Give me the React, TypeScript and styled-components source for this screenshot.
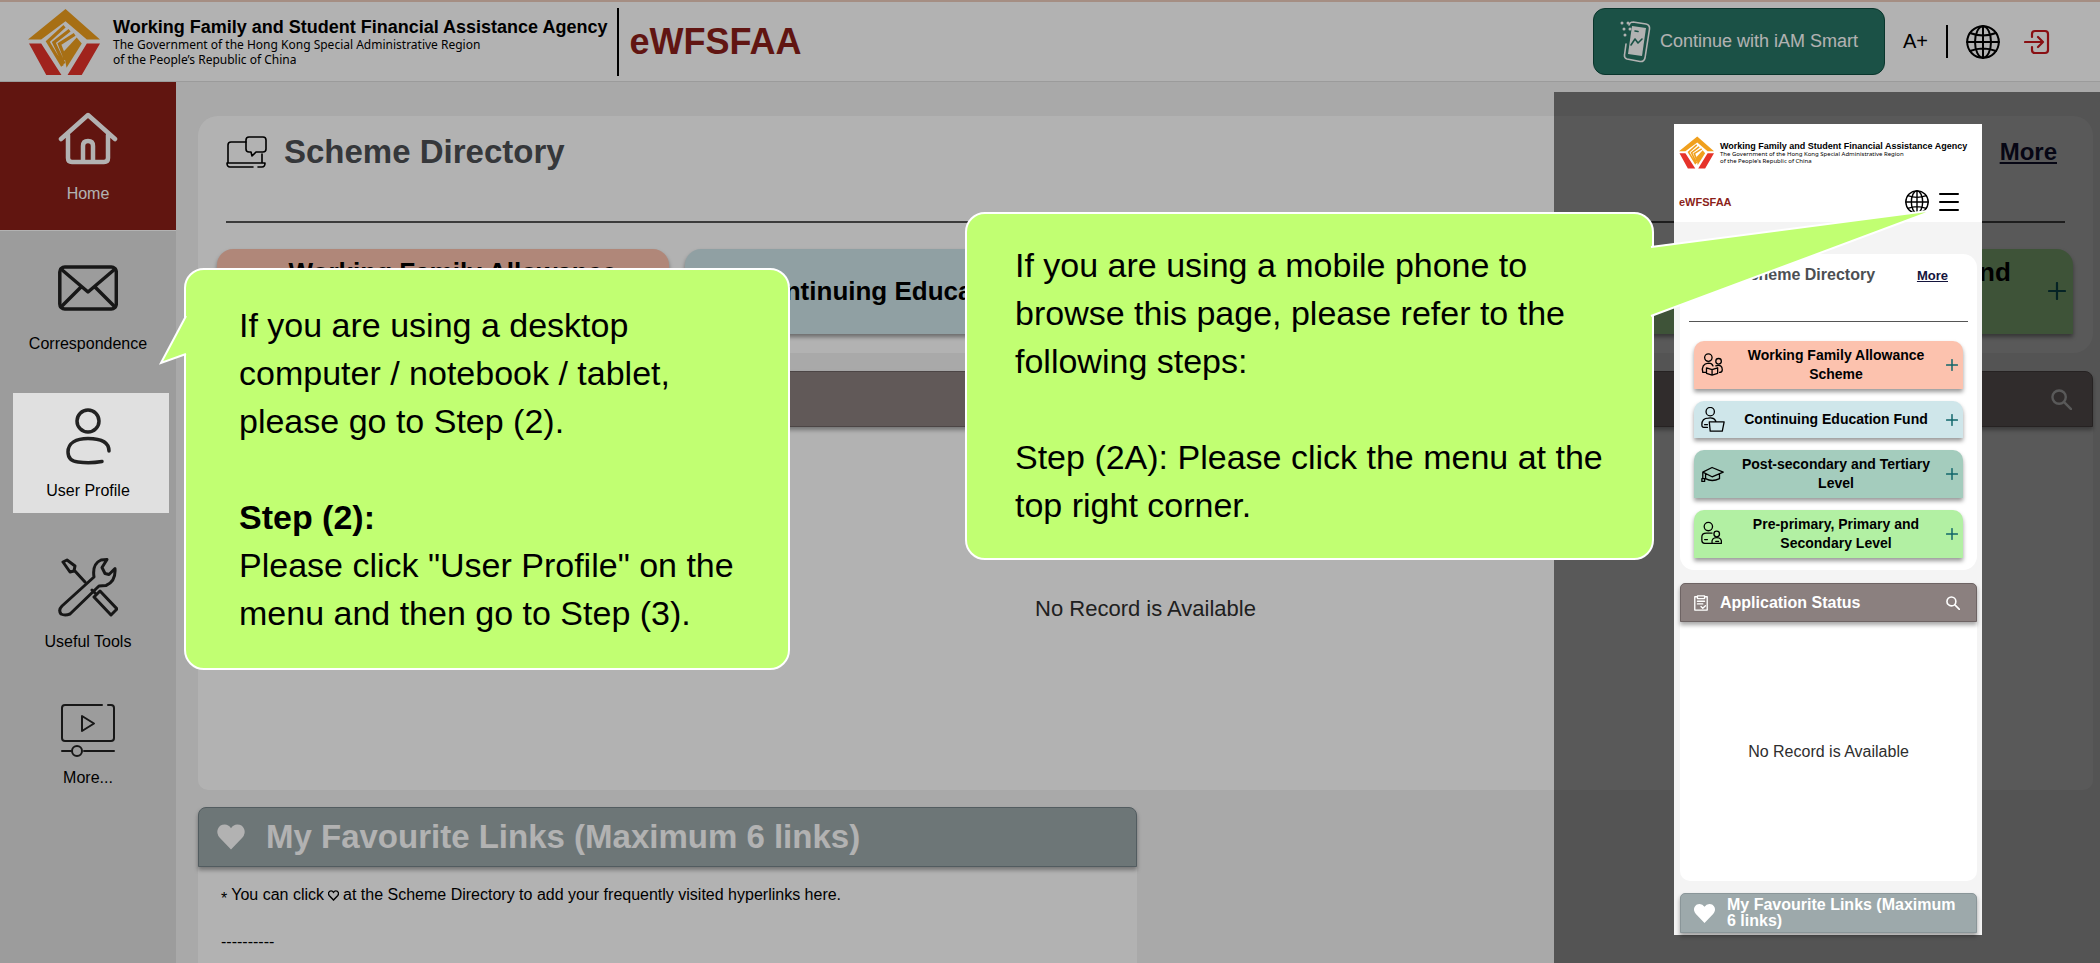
import React from "react";
import styled, { createGlobalStyle, css } from "styled-components";

const GlobalStyle = createGlobalStyle`
  *, *::before, *::after { box-sizing: border-box; }
  body { margin: 0; background: #f2f2f2; font-family: "Liberation Sans", Arial, sans-serif; color: #000; }
  button { font: inherit; color: inherit; border: 0; background: none; padding: 0; cursor: pointer; }
  a { color: inherit; text-decoration: none; }
  h1, h2, p, ul { margin: 0; padding: 0; }
  svg { display: block; flex: none; }
`;

/* ---------- icons ---------- */

const Line = styled.svg`
  fill: none;
  stroke: currentColor;
  stroke-linecap: round;
  stroke-linejoin: round;
`;

const AgencyLogo = ({ size }: { size: number }) => (
  <svg width={size} height={size} viewBox="0 -3 71 71" aria-hidden="true">
    <path fill="#f0a01e" d="M37 0 71 30H58L37 12 13 30H0Z" />
    <path fill="#e6332a" d="M1 34h12l20 31H18ZM71 34H58L39 65h14Z" />
    <path fill="none" stroke="#f0a01e" strokeWidth="3.2" d="M36 17 19.500 32 34 56M41 21 25.500 33 35.500 54M46 25 31 34.500 37 50" />
    <path fill="#f0a01e" d="m48 28 5 6-15 24-3-16Z" />
  </svg>
);

const HomeIcon = () => (
  <Line width="60" height="60" viewBox="0 0 60 60" strokeWidth="4.500">
    <path d="M3 30 30 6l27 24M10 26v23q0 4 4 4h32q4 0 4-4V26" />
    <path d="M25 52V37q0-5 5-5t5 5v15" />
  </Line>
);

const MailIcon = () => (
  <Line width="60" height="60" viewBox="0 0 60 60" strokeWidth="3.500">
    <rect x="1.800" y="8" width="56.500" height="42" rx="5" />
    <path d="m3 10 27 23 27-23M3 48l20-20M57 48 37 28" />
  </Line>
);

const UserIcon = () => (
  <Line width="60" height="60" viewBox="0 0 60 60" strokeWidth="3.500">
    <circle cx="30" cy="15" r="11" />
    <path d="M51 45C51 36 42 32.500 30 32.500S10 37 10 46q0 9 10 10 12 1.500 24-.5" />
  </Line>
);

const ToolsIcon = () => (
  <Line width="60" height="60" viewBox="0 0 60 60" strokeWidth="3">
    <path d="M3 57q-3-4 1-8L36 20Q34 7 43 3l6-.5-5 8 3 6 4 1 6-6q1 13-9 17l-7 .5L12 57q-5 2-9 0Z" />
    <path d="M16 13 27 25M34 33l4 4M5 5l4-2 8 6-1 5-4 1ZM36 40l6-6 17 18-6 6Z" />
  </Line>
);

const VideoIcon = () => (
  <Line width="60" height="60" viewBox="0 0 60 60" strokeWidth="2">
    <path d="M44 4H7Q4 4 4 7v30q0 3 3 3h46q3 0 3-3V7q0-3-3-3h-3M24 15v15l12-7.500ZM4 50h9M26 50h30" />
    <circle cx="19" cy="50" r="5" />
  </Line>
);

const SchemeIcon = ({ width }: { width: number }) => (
  <Line width={width} viewBox="0 0 41 32" strokeWidth="1.600">
    <path d="M20 6H5Q2 6 2 9v18M36 18v9M1 27h38q0 4-3 4h-4M27 31H4q-3 0-3-4" />
    <path d="M23 1h14q3 0 3 3v9q0 3-3 3h-7l-4 4-1-4h-2q-3 0-3-3V4q0-3 3-3Z" />
  </Line>
);

const GlobeIcon = ({ size }: { size: number }) => (
  <Line width={size} height={size} viewBox="0 0 34 34" strokeWidth="2">
    <circle cx="17" cy="17" r="15.800" />
    <ellipse cx="17" cy="17" rx="8" ry="15.800" />
    <path d="M17 1v32M1 17h32M4 8q13 5 26 0M4 26q13-5 26 0" />
  </Line>
);

const LogoutIcon = () => (
  <Line width="26" height="26" viewBox="0 0 26 26" strokeWidth="2.200">
    <path d="M8 8V5q0-3 3-3h10q3 0 3 3v16q0 3-3 3H11q-3 0-3-3v-3M1 13h18M14 8l5 5-5 5" />
  </Line>
);

const SmartPhoneIcon = () => (
  <Line width="32" height="44" viewBox="0 0 32 44" strokeWidth="1.600">
    <path d="M13 2l13 2q4 1 3.500 5L25 38q-1 4-5 3.500L7 39q-3-1-2.500-4L6 24M9 5q1-3 4-3" />
    <path fill="currentColor" stroke="none" d="M12 6l14 2-4 28-14-2Z" />
    <path stroke="#287565" d="m11 25 4-6 3 4 4-4M15 11l3 .5M12 37l5 1" />
    <path strokeWidth="3" strokeDasharray="0 6" d="M2 3h8M4 9h8M5 15h3" />
  </Line>
);

const SearchIcon = ({ size }: { size: number }) => (
  <Line width={size} height={size} viewBox="0 0 22 22" strokeWidth="2.500">
    <circle cx="8.500" cy="8.500" r="7" />
    <path d="m14 14 7 7" />
  </Line>
);

const HeartIcon = ({ size, outline }: { size: number; outline?: boolean }) => (
  <svg
    width={size}
    height={size}
    viewBox="0 0 24 24"
    fill={outline ? "none" : "currentColor"}
    stroke={outline ? "currentColor" : "none"}
    strokeWidth="3"
    aria-hidden="true"
  >
    <path d="M12 22 3 12.500Q0 9 1.500 5.500 3 2 7 2q3 0 5 3 2-3 5-3 4 0 5.500 3.500Q24 9 21 12.500Z" />
  </svg>
);

const ClipboardIcon = ({ size }: { size: number }) => (
  <Line width={size} height={size} viewBox="0 0 16 18" strokeWidth="1.500">
    <path d="M4 2H1v15h14V2h-3M4 1h8v3H4ZM4 7h8M4 10h6M8 13l2 2 3-3" />
  </Line>
);

const MenuIcon = () => (
  <Line width="20" height="20" viewBox="0 0 20 20" strokeWidth="2">
    <path d="M1 2h18M1 10h18M1 18h18" />
  </Line>
);

const PlusIcon = ({ size }: { size: number }) => (
  <Line width={size} height={size} viewBox="0 0 18 18" strokeWidth="2.200" color="#10656a">
    <path d="M1 9h16M9 1v16" />
  </Line>
);

const schemeDrawings: Record<string, React.ReactNode> = {
  family: (
    <>
      <circle cx="8" cy="6" r="4" />
      <circle cx="19" cy="10" r="3" />
      <path d="M5 22H2q-2-9 6-10 4 0 5 3M16 15q7-2 7 4 0 3-3 3M6 17l6 2 6-2v6l-6 2-6-2ZM12 19v6" />
    </>
  ),
  education: (
    <>
      <circle cx="10" cy="5" r="4.500" />
      <path d="M7 22H3q-2 0-2-3 0-7 7-7 6-1 8 3M9 16h16l-2 10H10ZM4 19h3" />
    </>
  ),
  graduate: <path d="M2 12 12 7l12 5-12 5ZM5 14v5q7 4 15 0v-5M2 12v7M1 19h3v3H1Z" />,
  child: (
    <>
      <circle cx="8" cy="6" r="4.500" />
      <circle cx="17" cy="14" r="3" />
      <path d="M11 24H4q-3 0-3-3v-4q0-4 5-4h6M12 24q-1-6 5-6t5 6ZM4 20h3M16 22h3" />
    </>
  ),
};

const SchemeGlyph = ({ name, size }: { name: string; size: number }) => (
  <Line width={size} height={size} viewBox="0 0 26 28" strokeWidth="1.400">
    {schemeDrawings[name]}
  </Line>
);

/* ---------- page frame ---------- */

const Page = styled.div`
  position: relative;
  display: flex;
  flex-direction: column;
  min-height: 100vh;
  overflow: hidden;
`;

const Header = styled.header`
  display: flex;
  align-items: center;
  height: 82px;
  padding: 0 50px 0 28px;
  background: #fff;
  border-top: 2px solid #ecccbc;
  border-bottom: 1px solid #dedede;
`;

const Brand = styled.a<{ $small?: boolean }>`
  display: flex;
  align-items: center;
  gap: ${(p) => (p.$small ? 6 : 13)}px;
  white-space: nowrap;
`;

const BrandText = styled.span`
  display: flex;
  flex-direction: column;
`;

const BrandName = styled.strong<{ $small?: boolean }>`
  font-size: ${(p) => (p.$small ? 9 : 18)}px;
  line-height: ${(p) => (p.$small ? 10 : 20)}px;
`;

const BrandSub = styled.span<{ $small?: boolean }>`
  font-family: "Noto Sans", sans-serif;
  font-size: ${(p) => (p.$small ? 6 : 12)}px;
  line-height: ${(p) => (p.$small ? 7 : 15)}px;
`;

const Divider = styled.span<{ $height: number }>`
  width: 2px;
  height: ${(p) => p.$height}px;
  background: #000;
`;

const SystemName = styled.h1<{ $small?: boolean }>`
  font-size: ${(p) => (p.$small ? 11 : 36)}px;
  line-height: 1;
  color: #8b1f1a;
`;

const HeaderStart = styled.div`
  display: flex;
  align-items: center;
  gap: 10px;
`;

const HeaderTools = styled.div`
  display: flex;
  align-items: center;
  gap: 18px;
  margin-left: auto;
`;

const SmartButton = styled.button`
  display: flex;
  align-items: center;
  gap: 8px;
  height: 67px;
  padding: 0 26px;
  border: 1px solid #0d4d3f;
  border-radius: 12px;
  background: #287565;
  color: #fff;
  font-size: 18px;
  white-space: nowrap;
`;

const ToolButton = styled.button<{ $red?: boolean }>`
  font-size: 20px;
  color: ${(p) => (p.$red ? "#c4161c" : "#000")};
  margin-left: ${(p) => (p.$red ? 6 : 0)}px;
`;

const Body = styled.div`
  flex: 1;
  display: flex;
`;

const Sidebar = styled.nav`
  flex: none;
  width: 176px;
  background: #e0e0e0;

  ul { list-style: none; }
`;

const NavRow = styled.li<{ $highlight?: boolean; $short?: boolean }>`
  height: ${(p) => (p.$short ? 132 : 149)}px;
  ${(p) => p.$highlight && css`padding: 13px 7px 16px 13px;`}
`;

const NavLink = styled.a<{ $active?: boolean; $highlight?: boolean; $short?: boolean }>`
  position: relative;
  z-index: ${(p) => (p.$highlight ? 2 : 0)};
  display: flex;
  flex-direction: column;
  align-items: center;
  justify-content: center;
  gap: ${(p) => (p.$short ? 8 : 16)}px;
  height: 100%;
  font-size: 16px;
  line-height: 18px;
  background: #e0e0e0;
  svg { color: #222; }

  ${(p) => p.$highlight && css`padding-right: 6px;`}
  ${(p) =>
    p.$active &&
    css`
      background: #8b1f17;
      color: #fff;
      border-bottom: 1px solid #fff;
      svg { color: #fff; }
    `}
`;

const Main = styled.main`
  flex: 1;
  min-width: 0;
  display: flex;
  flex-direction: column;
  padding: 34px 7px 0 22px;
  background: #f2f2f2;
`;

/* ---------- scheme directory ---------- */

const Directory = styled.section<{ $small?: boolean }>`
  background: #fff;
  border-radius: ${(p) => (p.$small ? 14 : 20)}px;
  margin-bottom: ${(p) => (p.$small ? 13 : 18)}px;
  padding-bottom: ${(p) => (p.$small ? 12 : 19)}px;
`;

const DirectoryHead = styled.div<{ $small?: boolean }>`
  display: flex;
  align-items: center;
  gap: ${(p) => (p.$small ? 16 : 17)}px;
  margin: ${(p) => (p.$small ? "0 9px" : "0 28px")};
  padding: ${(p) => (p.$small ? "11px 20px 36px 10px" : "16px 8px 49px 0")};
  border-bottom: ${(p) => (p.$small ? 1 : 2)}px solid #555;
`;

const DirectoryTitle = styled.h2<{ $small?: boolean }>`
  font-size: ${(p) => (p.$small ? 16 : 33)}px;
  line-height: ${(p) => (p.$small ? 20 : 40)}px;
  color: #4c4f53;
  white-space: nowrap;
`;

const MoreLink = styled.a<{ $small?: boolean }>`
  margin-left: auto;
  font-size: ${(p) => (p.$small ? 13 : 24)}px;
  font-weight: bold;
  color: #14143c;
  text-decoration: underline;
`;

const SchemeGrid = styled.div<{ $small?: boolean }>`
  display: grid;
  grid-template-columns: ${(p) => (p.$small ? "1fr" : "repeat(4, 1fr)")};
  gap: ${(p) => (p.$small ? 12 : 16)}px;
  padding: ${(p) => (p.$small ? "19px 14px 0" : "26px 20px 0 19px")};
`;

const SchemeButton = styled.button<{ $tone: string; $small?: boolean }>`
  display: flex;
  align-items: center;
  min-height: ${(p) => (p.$small ? 37 : 85)}px;
  padding: ${(p) => (p.$small ? "5px 5px 5px 6px" : "5px 7px 6px 12px")};
  border-radius: ${(p) => (p.$small ? "10px 10px 0 0" : "16px 16px 0 0")};
  background: ${(p) => p.$tone};
  box-shadow: 0 3px 4px rgba(0, 0, 0, 0.4);
`;

const SchemeName = styled.span<{ $small?: boolean }>`
  flex: 1;
  text-align: center;
  font-weight: bold;
  font-size: ${(p) => (p.$small ? 14 : 26)}px;
  line-height: ${(p) => (p.$small ? 19 : 37)}px;
`;

/* ---------- titled panels ---------- */

const Panel = styled.section<{ $half?: boolean; $small?: boolean }>`
  display: flex;
  flex-direction: column;
  width: ${(p) => (p.$half ? "calc(50% - 9px)" : "auto")};
  margin-bottom: ${(p) => (p.$half ? 0 : p.$small ? 12 : 17)}px;
  ${(p) => p.$half && css`flex: 1;`}
`;

const PanelHead = styled.div<{ $tone: string; $edge: string; $height: number; $small?: boolean }>`
  position: relative;
  display: flex;
  align-items: center;
  gap: ${(p) => (p.$small ? 11 : 20)}px;
  min-height: ${(p) => p.$height}px;
  padding: ${(p) => (p.$small ? "0 16px 0 12px" : "0 20px 0 17px")};
  border: 1px solid ${(p) => p.$edge};
  border-radius: ${(p) => (p.$small ? "5px 5px 0 0" : "8px 8px 0 0")};
  background: ${(p) => p.$tone};
  color: #fff;
  box-shadow: 0 3px 4px rgba(0, 0, 0, 0.35);

  button { margin-left: auto; }
`;

const PanelTitle = styled.h2<{ $small?: boolean }>`
  font-size: ${(p) => (p.$small ? 16 : 33)}px;
  line-height: ${(p) => (p.$small ? 16 : 40)}px;
`;

const EmptyBody = styled.p<{ $small?: boolean }>`
  display: flex;
  align-items: center;
  justify-content: center;
  height: ${(p) => (p.$small ? 259 : 363)}px;
  background: #fff;
  border-radius: 0 0 10px 10px;
  font-size: ${(p) => (p.$small ? 16 : 22)}px;
  color: #2e2e2e;
`;

const LinksBody = styled.div`
  flex: 1;
  display: flex;
  flex-direction: column;
  gap: 27px;
  min-height: 96px;
  padding: 18px 23px 0;
  background: #fff;
  font-size: 16px;
  line-height: 20px;
`;

const Hint = styled.p`
  display: flex;
  align-items: center;
  gap: 4px;
`;

const Star = styled.span`
  align-self: flex-end;
  line-height: 12px;
`;

/* ---------- tutorial layer ---------- */

const Shade = styled.div`
  position: absolute;
  inset: 0;
  z-index: 1;
  background: rgba(0, 0, 0, 0.3);
  pointer-events: none;
`;

const PhoneShade = styled.aside`
  position: absolute;
  top: 92px;
  right: 0;
  bottom: 0;
  z-index: 3;
  width: 26%;
  display: flex;
  justify-content: center;
  padding: 32px 0 28px 2px;
  background: rgba(0, 0, 0, 0.5);
`;

const Phone = styled.div`
  align-self: flex-start;
  width: 308px;
  background: #f4f4f4;
  padding-bottom: 2px;
`;

const PhoneHeader = styled.div`
  display: flex;
  flex-direction: column;
  gap: 20px;
  padding: 11px 5px 8px;
  background: #fff;
`;

const PhoneBar = styled.div`
  display: flex;
  align-items: center;
  justify-content: space-between;
  padding-right: 18px;
`;

const PhoneActions = styled.div`
  display: flex;
  align-items: center;
  gap: 10px;
`;

const PhoneMain = styled.div`
  padding: 32px 5px 0 6px;
`;

const calloutPlaces = {
  desktop: css`
    top: 268px;
    left: 184px;
    width: 606px;
    padding: 31px 40px 31px 53px;
    z-index: 4;
  `,
  mobile: css`
    top: 120px;
    right: 446px;
    width: 689px;
    padding: 27px 40px 29px 48px;
  `,
};

const Callout = styled.div<{ $place: keyof typeof calloutPlaces }>`
  position: absolute;
  ${(p) => calloutPlaces[p.$place]}
  border: 2px solid #fff;
  border-radius: 20px;
  background: #c1ff72;
  font-size: 34px;
  line-height: 48px;

  p { min-height: 48px; }
`;

const Tail = styled.svg<{ $place: keyof typeof calloutPlaces }>`
  position: absolute;
  fill: #c1ff72;
  ${(p) => (p.$place === "desktop" ? "top: 40px; right: 100%; margin-right: -4px;" : "top: -8px; left: 100%; margin-left: -4px;")}
`;

/* ---------- content ---------- */

const navItems = [
  { label: "Home", icon: <HomeIcon />, active: true },
  { label: "Correspondence", icon: <MailIcon /> },
  { label: "User Profile", icon: <UserIcon />, highlight: true },
  { label: "Useful Tools", icon: <ToolsIcon /> },
  { label: "More...", icon: <VideoIcon />, short: true },
];

const schemes = [
  { name: "Working Family Allowance Scheme", tone: "#fcc2ae", glyph: "family" },
  { name: "Continuing Education Fund", tone: "#cfe6ea", glyph: "education" },
  { name: "Post-secondary and Tertiary Level", tone: "#a4ccbd", glyph: "graduate" },
  { name: "Pre-primary, Primary and Secondary Level", tone: "#b2f0a3", glyph: "child" },
];

const AgencyBrand = ({ small }: { small?: boolean }) => (
  <Brand href="#" $small={small}>
    <AgencyLogo size={small ? 35 : 72} />
    <BrandText>
      <BrandName $small={small}>Working Family and Student Financial Assistance Agency</BrandName>
      <BrandSub $small={small}>The Government of the Hong Kong Special Administrative Region</BrandSub>
      <BrandSub $small={small}>of the People’s Republic of China</BrandSub>
    </BrandText>
  </Brand>
);

const SchemeDirectory = ({ small }: { small?: boolean }) => (
  <Directory $small={small}>
    <DirectoryHead $small={small}>
      <SchemeIcon width={small ? 24 : 41} />
      <DirectoryTitle $small={small}>Scheme Directory</DirectoryTitle>
      <MoreLink href="#" $small={small}>More</MoreLink>
    </DirectoryHead>
    <SchemeGrid $small={small}>
      {schemes.map((s) => (
        <SchemeButton key={s.name} $tone={s.tone} $small={small}>
          <SchemeGlyph name={s.glyph} size={small ? 26 : 32} />
          <SchemeName $small={small}>{s.name}</SchemeName>
          <PlusIcon size={small ? 12 : 18} />
        </SchemeButton>
      ))}
    </SchemeGrid>
  </Directory>
);

const ApplicationStatus = ({ small }: { small?: boolean }) => (
  <Panel $small={small}>
    <PanelHead $tone="#8b807f" $edge="#6e6464" $height={small ? 39 : 56} $small={small}>
      <ClipboardIcon size={small ? 16 : 30} />
      <PanelTitle $small={small}>Application Status</PanelTitle>
      <button aria-label="Search"><SearchIcon size={small ? 14 : 21} /></button>
    </PanelHead>
    <EmptyBody $small={small}>No Record is Available</EmptyBody>
  </Panel>
);

export default function App() {
  return (
    <Page>
      <GlobalStyle />
      <Header>
        <HeaderStart>
          <AgencyBrand />
          <Divider $height={68} />
          <SystemName>eWFSFAA</SystemName>
        </HeaderStart>
        <HeaderTools>
          <SmartButton>
            <SmartPhoneIcon />
            Continue with iAM Smart
          </SmartButton>
          <ToolButton>A+</ToolButton>
          <Divider $height={33} />
          <ToolButton aria-label="Language"><GlobeIcon size={34} /></ToolButton>
          <ToolButton $red aria-label="Log out"><LogoutIcon /></ToolButton>
        </HeaderTools>
      </Header>

      <Body>
        <Sidebar>
          <ul>
            {navItems.map((n) => (
              <NavRow key={n.label} $highlight={n.highlight} $short={n.short}>
                <NavLink href="#" $active={n.active} $highlight={n.highlight} $short={n.short}>
                  {n.icon}
                  {n.label}
                </NavLink>
              </NavRow>
            ))}
          </ul>
        </Sidebar>
        <Main>
          <SchemeDirectory />
          <ApplicationStatus />
          <Panel $half>
            <PanelHead $tone="#9da9ab" $edge="#76858a" $height={60}>
              <HeartIcon size={30} />
              <PanelTitle>My Favourite Links (Maximum 6 links)</PanelTitle>
            </PanelHead>
            <LinksBody>
              <Hint>
                <Star>*</Star> You can click <HeartIcon size={11} outline /> at the Scheme Directory to add your
                frequently visited hyperlinks here.
              </Hint>
              <p>----------</p>
            </LinksBody>
          </Panel>
        </Main>
      </Body>

      <Shade />

      <PhoneShade>
        <Phone>
          <PhoneHeader>
            <AgencyBrand small />
            <PhoneBar>
              <SystemName as="h2" $small>eWFSFAA</SystemName>
              <PhoneActions>
                <button aria-label="Language"><GlobeIcon size={24} /></button>
                <button aria-label="Menu"><MenuIcon /></button>
              </PhoneActions>
            </PhoneBar>
          </PhoneHeader>
          <PhoneMain>
            <SchemeDirectory small />
            <ApplicationStatus small />
            <PanelHead $tone="#9da9ab" $edge="#8a9699" $height={40} $small>
              <HeartIcon size={23} />
              <PanelTitle $small>My Favourite Links (Maximum 6 links)</PanelTitle>
            </PanelHead>
          </PhoneMain>
        </Phone>
        <Callout $place="mobile">
          <Tail $place="mobile" width="290" height="120" viewBox="0 0 290 120">
            <path d="M0 41 287 4 0 111Z" />
            <path d="M3 41 287 4 3 110" stroke="#fff" strokeWidth="2" />
          </Tail>
          <p>If you are using a mobile phone to browse this page, please refer to the following steps:</p>
          <p />
          <p>Step (2A): Please click the menu at the top right corner.</p>
        </Callout>
      </PhoneShade>

      <Callout $place="desktop">
        <Tail $place="desktop" width="32" height="60" viewBox="0 0 32 60">
          <path d="M32 2 28 6 3 53 28 44 32 46Z" />
          <path d="M28 6 3 53 28 44" stroke="#fff" strokeWidth="2" />
        </Tail>
        <p>If you are using a desktop computer / notebook / tablet, please go to Step (2).</p>
        <p />
        <p><strong>Step (2):</strong></p>
        <p>Please click "User Profile" on the menu and then go to Step (3).</p>
      </Callout>
    </Page>
  );
}
